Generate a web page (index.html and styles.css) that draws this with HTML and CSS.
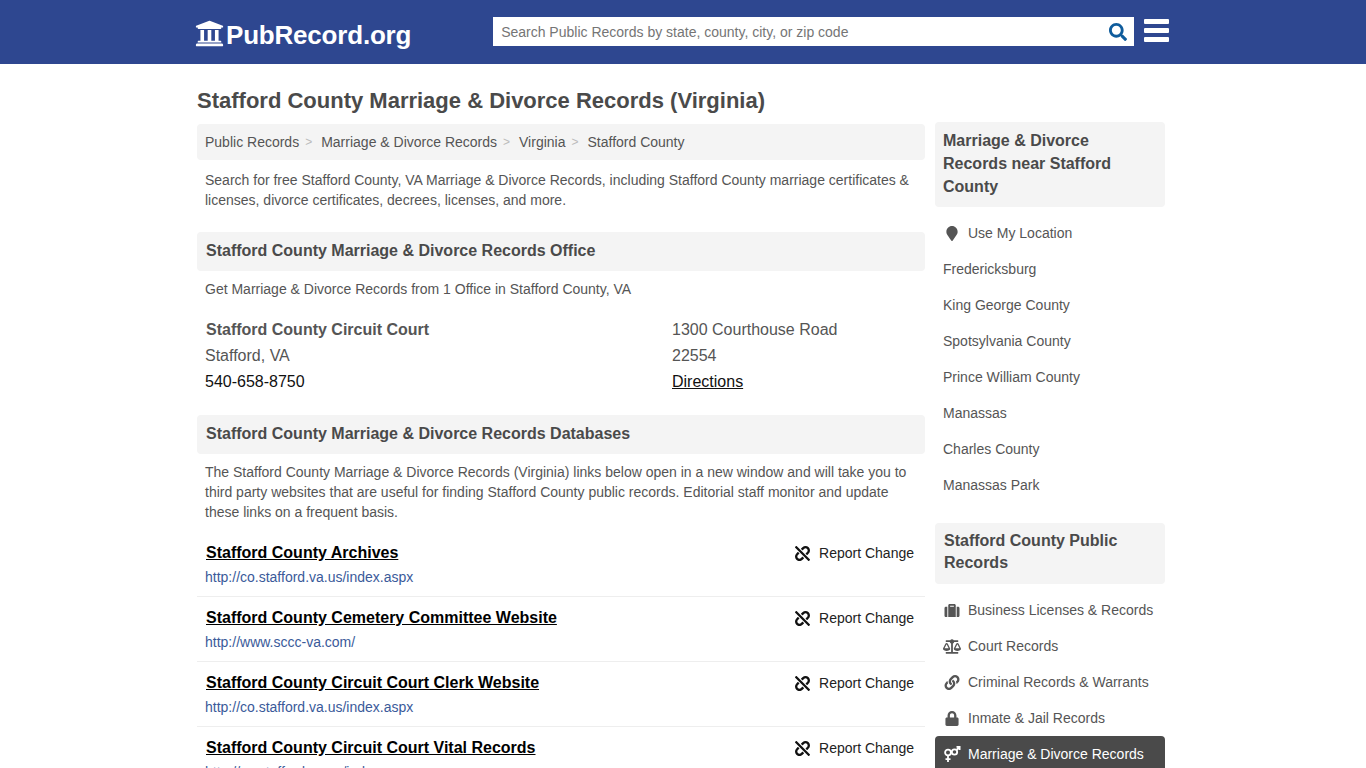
FILE: index.html
```html
<!DOCTYPE html>
<html lang="en">

<head>
    <meta charset="UTF-8">
    <meta name="viewport" content="width=device-width, initial-scale=1.0">
    <title>Stafford County Marriage &amp; Divorce Records (Virginia)</title>
    <link rel="stylesheet" href="styles.css">
</head>

<body>
    <svg class="icon-defs" aria-hidden="true">
        <symbol id="i-university" viewBox="0 0 512 512"><path d="M496 128v16a8 8 0 0 1-8 8h-24v12c0 6.627-5.373 12-12 12H60c-6.627 0-12-5.373-12-12v-12H24a8 8 0 0 1-8-8v-16a8 8 0 0 1 4.941-7.392l232-88a7.996 7.996 0 0 1 6.118 0l232 88A8 8 0 0 1 496 128zm-24 304H40c-13.255 0-24 10.745-24 24v16a8 8 0 0 0 8 8h464a8 8 0 0 0 8-8v-16c0-13.255-10.745-24-24-24zM96 192v192H60c-6.627 0-12 5.373-12 12v20h416v-20c0-6.627-5.373-12-12-12h-36V192h-64v192h-64V192h-64v192h-64V192H96z"/></symbol>
        <symbol id="i-search" viewBox="0 0 512 512"><path d="M505 442.7L405.3 343c-4.5-4.5-10.6-7-17-7H372c27.6-35.3 44-79.7 44-128C416 93.1 322.9 0 208 0S0 93.1 0 208s93.1 208 208 208c48.3 0 92.7-16.4 128-44v16.3c0 6.4 2.5 12.5 7 17l99.7 99.7c9.4 9.4 24.6 9.4 33.9 0l28.3-28.3c9.4-9.4 9.4-24.6.1-34zM208 336c-70.7 0-128-57.2-128-128 0-70.7 57.2-128 128-128 70.7 0 128 57.2 128 128 0 70.7-57.2 128-128 128z"/></symbol>
        <symbol id="i-marker" viewBox="0 0 384 512"><path d="M172.268 501.67C26.97 291.031 0 268.413 0 192 0 85.961 85.961 0 192 0s192 85.961 192 192c0 76.413-26.97 99.031-172.268 309.67-9.535 13.774-29.93 13.773-39.464 0z"/></symbol>
        <symbol id="i-suitcase" viewBox="0 0 512 512"><path d="M128 480h256V80c0-26.5-21.5-48-48-48H176c-26.5 0-48 21.5-48 48v400zm64-384h128v32H192V96zm320 80v256c0 26.5-21.5 48-48 48h-48V128h48c26.5 0 48 21.5 48 48zM96 480H48c-26.5 0-48-21.5-48-48V176c0-26.5 21.5-48 48-48h48v352z"/></symbol>
        <symbol id="i-scale" viewBox="0 0 640 512"><path d="M256 336h-.02c0-16.18 1.34-8.73-85.05-181.51-17.65-35.29-68.19-35.36-85.87 0C-2.06 328.75.02 320.33.02 336H0c0 44.18 57.31 80 128 80s128-35.82 128-80zM128 176l72 144H56l72-144zm511.98 160c0-16.18 1.34-8.73-85.05-181.51-17.65-35.29-68.19-35.36-85.87 0-87.12 174.26-85.04 165.84-85.04 181.51H384c0 44.18 57.31 80 128 80s128-35.82 128-80h-.02zM440 320l72-144 72 144H440zm88 128H352V153.25c23.51-10.29 41.16-31.48 46.39-57.25H528c8.84 0 16-7.16 16-16V48c0-8.84-7.16-16-16-16H383.64C369.04 12.68 346.09 0 320 0s-49.04 12.68-63.64 32H112c-8.84 0-16 7.16-16 16v32c0 8.84 7.16 16 16 16h129.61c5.23 25.76 22.87 46.96 46.39 57.25V448H112c-8.84 0-16 7.16-16 16v32c0 8.84 7.16 16 16 16h416c8.84 0 16-7.16 16-16v-32c0-8.84-7.16-16-16-16z"/></symbol>
        <symbol id="i-link" viewBox="0 0 512 512"><path d="M326.612 185.391c59.747 59.809 58.927 155.698.36 214.59-.11.12-.24.25-.36.37l-67.2 67.2c-59.27 59.27-155.699 59.262-214.96 0-59.27-59.26-59.27-155.7 0-214.96l37.106-37.106c9.84-9.84 26.786-3.3 27.294 10.606.648 17.722 3.826 35.527 9.69 52.721 1.986 5.822.567 12.262-3.783 16.612l-13.087 13.087c-28.026 28.026-28.905 73.66-1.155 101.96 28.024 28.579 74.086 28.749 102.325.51l67.2-67.19c28.191-28.191 28.073-73.757 0-101.83-3.701-3.694-7.429-6.564-10.341-8.569a16.037 16.037 0 0 1-6.947-12.606c-.396-10.567 3.348-21.456 11.698-29.806l21.054-21.055c5.521-5.521 14.182-6.199 20.584-1.731a152.482 152.482 0 0 1 20.522 17.197zM467.547 44.449c-59.261-59.262-155.69-59.27-214.96 0l-67.2 67.2c-.12.12-.25.25-.36.37-58.566 58.892-59.387 154.781.36 214.59a152.454 152.454 0 0 0 20.521 17.196c6.402 4.468 15.064 3.789 20.584-1.731l21.054-21.055c8.35-8.35 12.094-19.239 11.698-29.806a16.037 16.037 0 0 0-6.947-12.606c-2.912-2.005-6.64-4.875-10.341-8.569-28.073-28.073-28.191-73.639 0-101.83l67.2-67.19c28.239-28.239 74.3-28.069 102.325.51 27.75 28.3 26.872 73.934-1.155 101.96l-13.087 13.087c-4.35 4.35-5.769 10.79-3.783 16.612 5.864 17.194 9.042 34.999 9.69 52.721.509 13.906 17.454 20.446 27.294 10.606l37.106-37.106c59.271-59.259 59.271-155.699.001-214.959z"/></symbol>
        <symbol id="i-lock" viewBox="0 0 448 512"><path d="M400 224h-24v-72C376 68.2 307.8 0 224 0S72 68.2 72 152v72H48c-26.5 0-48 21.5-48 48v192c0 26.5 21.5 48 48 48h352c26.5 0 48-21.5 48-48V272c0-26.5-21.5-48-48-48zm-104 0H152v-72c0-39.7 32.3-72 72-72s72 32.3 72 72v72z"/></symbol>
        <symbol id="i-venus-mars" viewBox="0 0 17 16"><g fill="none" stroke="currentColor" stroke-width="1.8"><circle cx="4.5" cy="6.5" r="2.9"/><circle cx="11" cy="6" r="2.7"/><path d="M4.5 9.5V16M2 13.2h5M13 4l3-3M13 .9h3.1V4"/></g></symbol>
        <symbol id="i-unlink" viewBox="0 0 512 512"><path d="M304.083 405.907c4.686 4.686 4.686 12.284 0 16.971l-44.674 44.674c-59.263 59.262-155.693 59.266-214.961 0-59.264-59.265-59.264-155.696 0-214.96l44.675-44.675c4.686-4.686 12.284-4.686 16.971 0l39.598 39.598c4.686 4.686 4.686 12.284 0 16.971l-44.675 44.674c-28.072 28.073-28.072 73.75 0 101.823 28.072 28.072 73.75 28.073 101.824 0l44.674-44.674c4.686-4.686 12.284-4.686 16.971 0l39.597 39.598zm-56.568-260.216c4.686 4.686 12.284 4.686 16.971 0l44.674-44.674c28.072-28.075 73.75-28.073 101.824 0 28.072 28.073 28.072 73.75 0 101.823l-44.675 44.674c-4.686 4.686-4.686 12.284 0 16.971l39.598 39.598c4.686 4.686 12.284 4.686 16.971 0l44.675-44.675c59.265-59.265 59.265-155.695 0-214.96-59.266-59.264-155.695-59.264-214.961 0l-44.674 44.674c-4.686 4.686-4.686 12.284 0 16.971l39.597 39.598zm234.828 359.28l22.627-22.627c9.373-9.373 9.373-24.569 0-33.941L63.598 7.029c-9.373-9.373-24.569-9.373-33.941 0L7.029 29.657c-9.373 9.373-9.373 24.569 0 33.941l441.373 441.373c9.373 9.372 24.569 9.372 33.941 0z"/></symbol>
    </svg>

    <header class="topbar">
        <div class="topbar-inner">
            <a class="logo" href="#">
                <svg class="logo-icon"><use href="#i-university"/></svg>
                <span>PubRecord.org</span>
            </a>
            <form class="search">
                <input class="search-input" type="text" placeholder="Search Public Records by state, county, city, or zip code">
                <svg class="search-icon"><use href="#i-search"/></svg>
            </form>
            <div class="menu-btn">
                <span></span>
                <span></span>
                <span></span>
            </div>
        </div>
    </header>

    <div class="page">
        <main class="content">
            <h1>Stafford County Marriage &amp; Divorce Records (Virginia)</h1>

            <div class="breadcrumb">
                <a href="#">Public Records</a><i>&gt;</i>
                <a href="#">Marriage &amp; Divorce Records</a><i>&gt;</i>
                <a href="#">Virginia</a><i>&gt;</i>
                <a href="#">Stafford County</a>
            </div>

            <p class="intro">Search for free Stafford County, VA Marriage &amp; Divorce Records, including Stafford County marriage certificates &amp; licenses, divorce certificates, decrees, licenses, and more.</p>

            <h2 class="section-title">Stafford County Marriage &amp; Divorce Records Office</h2>
            <p class="section-text">Get Marriage &amp; Divorce Records from 1 Office in Stafford County, VA</p>

            <div class="office">
                <div class="office-col">
                    <strong>Stafford County Circuit Court</strong>
                    <span>Stafford, VA</span>
                    <a class="phone" href="#">540-658-8750</a>
                </div>
                <div class="office-col">
                    <span>1300 Courthouse Road</span>
                    <span>22554</span>
                    <a class="directions" href="#">Directions</a>
                </div>
            </div>

            <h2 class="section-title">Stafford County Marriage &amp; Divorce Records Databases</h2>
            <p class="section-text">The Stafford County Marriage &amp; Divorce Records (Virginia) links below open in a new window and will take you to third party websites that are useful for finding Stafford County public records. Editorial staff monitor and update these links on a frequent basis.</p>

            <ul class="links">
                <li>
                    <div class="link-top">
                        <a class="link-name" href="#">Stafford County Archives</a>
                        <a class="report" href="#"><svg><use href="#i-unlink"/></svg>Report Change</a>
                    </div>
                    <a class="link-url" href="#">http://co.stafford.va.us/index.aspx</a>
                </li>
                <li>
                    <div class="link-top">
                        <a class="link-name" href="#">Stafford County Cemetery Committee Website</a>
                        <a class="report" href="#"><svg><use href="#i-unlink"/></svg>Report Change</a>
                    </div>
                    <a class="link-url" href="#">http://www.sccc-va.com/</a>
                </li>
                <li>
                    <div class="link-top">
                        <a class="link-name" href="#">Stafford County Circuit Court Clerk Website</a>
                        <a class="report" href="#"><svg><use href="#i-unlink"/></svg>Report Change</a>
                    </div>
                    <a class="link-url" href="#">http://co.stafford.va.us/index.aspx</a>
                </li>
                <li>
                    <div class="link-top">
                        <a class="link-name" href="#">Stafford County Circuit Court Vital Records</a>
                        <a class="report" href="#"><svg><use href="#i-unlink"/></svg>Report Change</a>
                    </div>
                    <a class="link-url" href="#">http://co.stafford.va.us/index.aspx</a>
                </li>
            </ul>
        </main>

        <aside class="sidebar">
            <h3 class="side-title">Marriage &amp; Divorce Records near Stafford County</h3>
            <ul class="side-list">
                <li><a href="#"><svg><use href="#i-marker"/></svg>Use My Location</a></li>
                <li><a class="plain" href="#">Fredericksburg</a></li>
                <li><a class="plain" href="#">King George County</a></li>
                <li><a class="plain" href="#">Spotsylvania County</a></li>
                <li><a class="plain" href="#">Prince William County</a></li>
                <li><a class="plain" href="#">Manassas</a></li>
                <li><a class="plain" href="#">Charles County</a></li>
                <li><a class="plain" href="#">Manassas Park</a></li>
            </ul>

            <h3 class="side-title side-title-2">Stafford County Public Records</h3>
            <ul class="side-list">
                <li><a href="#"><svg><use href="#i-suitcase"/></svg>Business Licenses &amp; Records</a></li>
                <li><a href="#"><svg><use href="#i-scale"/></svg>Court Records</a></li>
                <li><a href="#"><svg><use href="#i-link"/></svg>Criminal Records &amp; Warrants</a></li>
                <li><a href="#"><svg><use href="#i-lock"/></svg>Inmate &amp; Jail Records</a></li>
                <li class="active"><a href="#"><svg><use href="#i-venus-mars"/></svg>Marriage &amp; Divorce Records</a></li>
            </ul>
        </aside>
    </div>
</body>
</html>
```

FILE: styles.css
```css
* {
    margin: 0;
    padding: 0;
    box-sizing: border-box;
}

body {
    background-color: #fff;
    font-family: "Liberation Sans", Arial, sans-serif;
    font-size: 14px;
    line-height: 20px;
    color: #555;
}

a {
    color: inherit;
    text-decoration: none;
}

ul {
    list-style: none;
}

.icon-defs {
    display: none;
}

/* Header */
.topbar {
    height: 64px;
    background-color: #2e4790;
}

.topbar-inner {
    width: 972px;
    height: 64px;
    margin: 0 auto;
    display: flex;
    align-items: flex-start;
}

.logo {
    width: 298px;
    height: 64px;
    margin-left: 0;
    display: flex;
    align-items: center;
    color: #fff;
    font-size: 26px;
    font-weight: bold;
    letter-spacing: -0.2px;
}

.logo-icon {
    width: 29px;
    height: 29px;
    margin: 3px 2px 0 -2px;
    fill: #fff;
}

.logo span {
    margin-top: 6px;
}

.search {
    width: 645px;
    height: 29px;
    margin-top: 17px;
    background-color: #fff;
    display: flex;
    align-items: center;
    padding: 0 7px 0 8px;
}

.search-input {
    flex: 1;
    border: none;
    outline: none;
    font-family: inherit;
    font-size: 14px;
    color: #555;
}

.search-input::placeholder {
    color: #757575;
    opacity: 1;
}

.search-icon {
    width: 18px;
    height: 18px;
    fill: #0f5c9c;
}

.menu-btn {
    width: 25px;
    margin: 19px 0 0 10px;
    display: flex;
    flex-direction: column;
    gap: 4px;
}

.menu-btn span {
    height: 5px;
    background-color: #fff;
    border-radius: 1px;
}

/* Main column */
.page {
    width: 972px;
    margin: 0 auto;
    padding-right: 4px;
    display: flex;
    gap: 10px;
    align-items: flex-start;
}

.content {
    width: 728px;
}

h1 {
    margin-top: 23px;
    font-size: 22px;
    line-height: 27px;
    color: #4a4a4a;
}

.breadcrumb {
    height: 36px;
    margin-top: 10px;
    padding: 0 8px;
    background-color: #f4f4f4;
    border-radius: 4px;
    display: flex;
    align-items: center;
}

.breadcrumb i {
    margin: 0 9px 0 6px;
    font-style: normal;
    font-size: 12px;
    color: #bbb;
}

.intro {
    margin-top: 10px;
    padding: 0 8px;
}

.section-title {
    height: 39px;
    margin-top: 22px;
    padding: 0 9px;
    background-color: #f4f4f4;
    border-radius: 4px;
    font-size: 16px;
    line-height: 37px;
    color: #4a4a4a;
}

.section-text {
    margin-top: 8px;
    padding: 0 8px;
}

.office {
    margin-top: 18px;
    display: flex;
    font-size: 16px;
    line-height: 26px;
}

.office-col {
    display: flex;
    flex-direction: column;
    align-items: flex-start;
    padding-left: 8px;
    width: 475px;
}

.office-col + .office-col {
    width: auto;
    padding-left: 0;
}

.office-col strong {
    margin-left: 1px;
}

.phone,
.directions {
    color: #111;
}

.directions {
    text-decoration: underline;
}

.office + .section-title {
    margin-top: 20px;
}

.links {
    margin-top: 10px;
}

.links li {
    height: 65px;
    padding: 8px 11px 0 9px;
    border-bottom: 1px solid #eee;
}

.link-top {
    display: flex;
    justify-content: space-between;
    align-items: center;
    height: 26px;
}

.link-name {
    font-size: 16px;
    font-weight: bold;
    color: #000;
    text-decoration: underline;
}

.report {
    display: flex;
    align-items: center;
    color: #222;
}

.report svg {
    width: 15px;
    height: 15px;
    margin-right: 9px;
    fill: #111;
}

.link-url {
    display: block;
    margin: 1px 0 0 -1px;
    color: #3a5a9a;
}

/* Sidebar */
.sidebar {
    width: 230px;
    margin-top: 58px;
}

.side-title {
    padding: 7px 8px 9px;
    background-color: #f4f4f4;
    border-radius: 4px;
    font-size: 16px;
    line-height: 23px;
    color: #4a4a4a;
}

.side-title-2 {
    margin-top: 20px;
    padding: 7px 9px 10px;
    line-height: 22px;
}

.side-list {
    margin-top: 8px;
}

.side-list li {
    height: 36px;
}

.side-list a {
    height: 36px;
    padding: 0 8px;
    display: flex;
    align-items: center;
    color: #555;
}

.side-list svg {
    width: 18px;
    height: 15px;
    margin: 0 7px 0 0;
    fill: #555;
    color: #555;
}

.side-list .active a {
    background-color: #4a4a4a;
    border-radius: 4px 4px 0 0;
    color: #fff;
}

.side-list .active svg {
    height: 16px;
    fill: #fff;
    color: #fff;
}
```
